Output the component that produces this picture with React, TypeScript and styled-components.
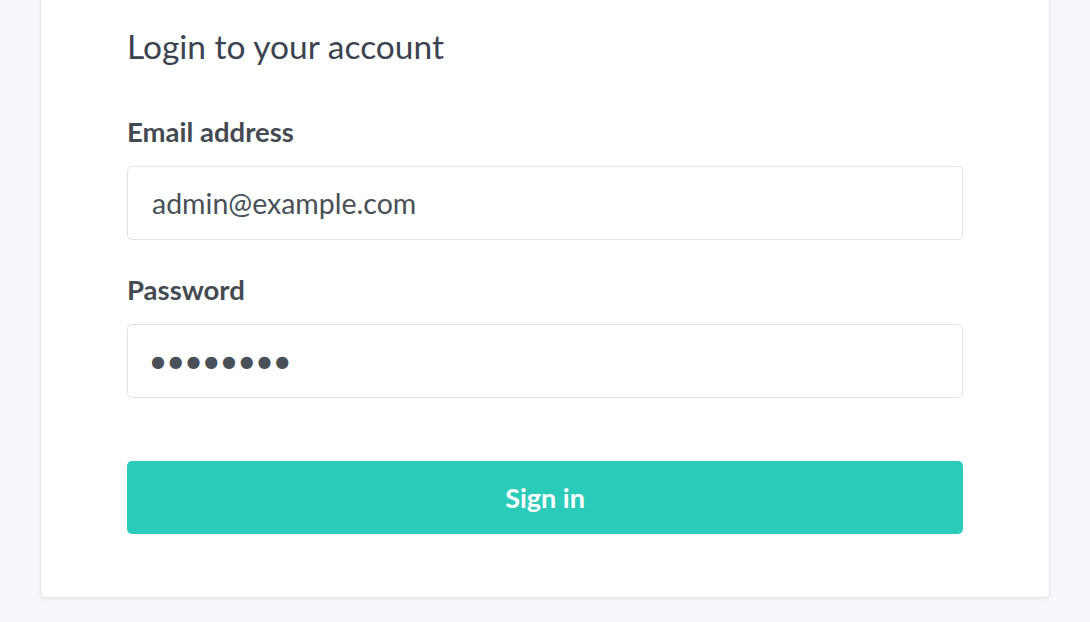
import React from "react";
import styled, { createGlobalStyle } from "styled-components";

const Global = createGlobalStyle`
  html, body { margin: 0; padding: 0; background: #f5f7fb; }
  body { font-family: "Lato", "Noto Sans", sans-serif; color: #495057; }
  * { box-sizing: border-box; }
`;

const Page = styled.div`
  width: 1090px;
  height: 622px;
  overflow: hidden;
  padding: 0 40px;
`;

const Card = styled.form`
  margin-top: -20px;
  width: 1010px;
  background: #fff;
  border: 1px solid #e1e5ec;
  border-radius: 5px;
  box-shadow: 0 2px 3px rgba(0, 0, 0, 0.04);
  padding: 45px 86px 63px;
  display: flex;
  flex-direction: column;
`;

const Title = styled.h2`
  margin: 0 0 51px;
  font-size: 33.5px;
  font-weight: 400;
  line-height: 40px;
  color: #3c4350;
`;

const Field = styled.div`
  display: flex;
  flex-direction: column;
  gap: 19px;
  margin-bottom: 35px;
`;

const Label = styled.label`
  font-size: 27.5px;
  font-weight: 700;
  line-height: 30px;
  color: #444a52;
`;

const Input = styled.input<{ $dots?: boolean }>`
  height: 74px;
  width: 100%;
  border: 1px solid #dfe3e9;
  border-radius: 5px;
  padding: 0 ${(p) => (p.$dots ? "23px" : "24px")};
  font-family: ${(p) => (p.$dots ? '"DejaVu Sans", sans-serif' : "inherit")};
  font-size: ${(p) => (p.$dots ? "16px" : "28.5px")};
  letter-spacing: ${(p) => (p.$dots ? "3.8px" : "0")};
  color: #495057;
  background: #fff;
  outline: none;
`;

const Button = styled.button`
  margin-top: 28px;
  height: 73px;
  width: 100%;
  border: none;
  border-radius: 5px;
  background: #2bcbba;
  color: #fff;
  font-family: inherit;
  font-size: 27px;
  font-weight: 700;
  cursor: pointer;
`;

export default function App() {
  return (
    <Page>
      <Global />
      <Card onSubmit={(e) => e.preventDefault()}>
        <Title>Login to your account</Title>
        <Field>
          <Label>Email address</Label>
          <Input type="email" defaultValue="admin@example.com" readOnly />
        </Field>
        <Field>
          <Label>Password</Label>
          <Input $dots type="text" aria-label="Password" defaultValue="●●●●●●●●" readOnly />
        </Field>
        <Button type="submit">Sign in</Button>
      </Card>
    </Page>
  );
}
